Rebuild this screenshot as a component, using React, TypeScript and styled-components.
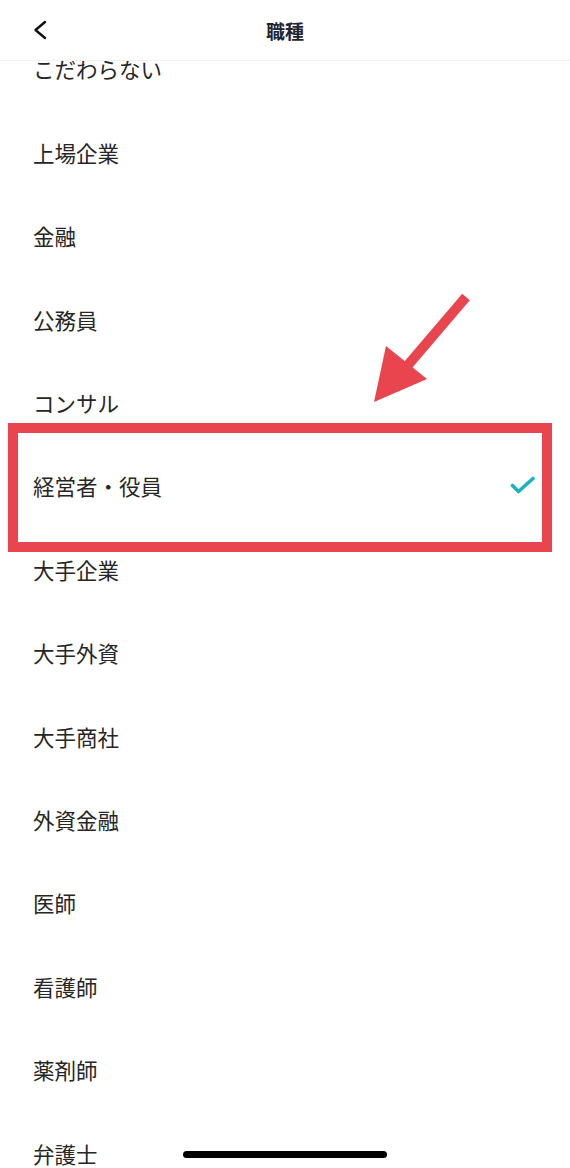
import React from "react";
import styled, { createGlobalStyle } from "styled-components";

const GlobalStyle = createGlobalStyle`
  html, body { margin: 0; padding: 0; background: #ffffff; }
  body { font-family: "Noto Sans CJK JP", "Noto Sans", sans-serif; }
  * { box-sizing: border-box; }
`;

const Screen = styled.div`
  position: relative;
  width: 570px;
  height: 1168px;
  overflow: hidden;
  background: #ffffff;
  display: flex;
  flex-direction: column;
`;

const Header = styled.header`
  position: relative;
  z-index: 2;
  flex: 0 0 61px;
  height: 61px;
  display: grid;
  grid-template-columns: 80px 1fr 80px;
  align-items: center;
  background: #ffffff;
  border-bottom: 1px solid #f1f1f3;
`;

const BackButton = styled.button`
  border: 0;
  background: transparent;
  padding: 0 0 0 33px;
  height: 100%;
  display: flex;
  align-items: center;
  cursor: pointer;
`;

const Title = styled.h1`
  margin: 0;
  text-align: center;
  font-size: 19px;
  font-weight: 600;
  color: #1e2432;
  line-height: 1;
  padding-top: 1px;
`;

const Viewport = styled.div`
  flex: 1;
  overflow: hidden;
`;

const List = styled.ul`
  list-style: none;
  margin: -33.5px 0 0 0;
  padding: 0;
`;

const Row = styled.li`
  height: 83.4px;
  display: flex;
  align-items: center;
  justify-content: space-between;
  padding: 0 34px 0 33px;
  font-size: 21.5px;
  font-weight: 400;
  color: #262626;
  line-height: 1;
`;

const Highlight = styled.div`
  position: absolute;
  left: 8px;
  top: 423px;
  width: 544px;
  height: 129px;
  border: 10.5px solid #e8454f;
  pointer-events: none;
  z-index: 3;
`;

const Arrow = styled.svg`
  position: absolute;
  left: 360px;
  top: 285px;
  width: 120px;
  height: 125px;
  z-index: 3;
  pointer-events: none;
`;

const HomeIndicator = styled.div`
  position: absolute;
  left: 183px;
  bottom: 10px;
  width: 204px;
  height: 7px;
  border-radius: 4px;
  background: #000000;
  z-index: 4;
`;

const items = [
  "こだわらない",
  "上場企業",
  "金融",
  "公務員",
  "コンサル",
  "経営者・役員",
  "大手企業",
  "大手外資",
  "大手商社",
  "外資金融",
  "医師",
  "看護師",
  "薬剤師",
  "弁護士",
];

const selected = "経営者・役員";

const Check = () => (
  <svg width="26" height="20" viewBox="0 0 26 20">
    <polyline
      points="2.5,9.5 8.5,15.5 23,2.5"
      fill="none"
      stroke="#1bb3be"
      strokeWidth="3.6"
      strokeLinecap="round"
      strokeLinejoin="round"
    />
  </svg>
);

export default function App() {
  return (
    <>
      <GlobalStyle />
      <Screen>
        <Header>
          <BackButton aria-label="戻る">
            <svg width="14" height="20" viewBox="0 0 14 20">
              <polyline
                points="12,2 2.5,10 12,18"
                fill="none"
                stroke="#111"
                strokeWidth="2.4"
                strokeLinecap="round"
                strokeLinejoin="round"
              />
            </svg>
          </BackButton>
          <Title>職種</Title>
          <div />
        </Header>
        <Viewport>
          <List>
            {items.map((it) => (
              <Row key={it}>
                <span>{it}</span>
                {it === selected && <Check />}
              </Row>
            ))}
          </List>
        </Viewport>
        <Highlight />
        <Arrow viewBox="360 285 120 125">
          <line x1="466" y1="297" x2="408" y2="365" stroke="#e8454f" strokeWidth="10" strokeLinecap="butt" />
          <polygon points="374,402 386,346 427,379" fill="#e8454f" />
        </Arrow>
        <HomeIndicator />
      </Screen>
    </>
  );
}
